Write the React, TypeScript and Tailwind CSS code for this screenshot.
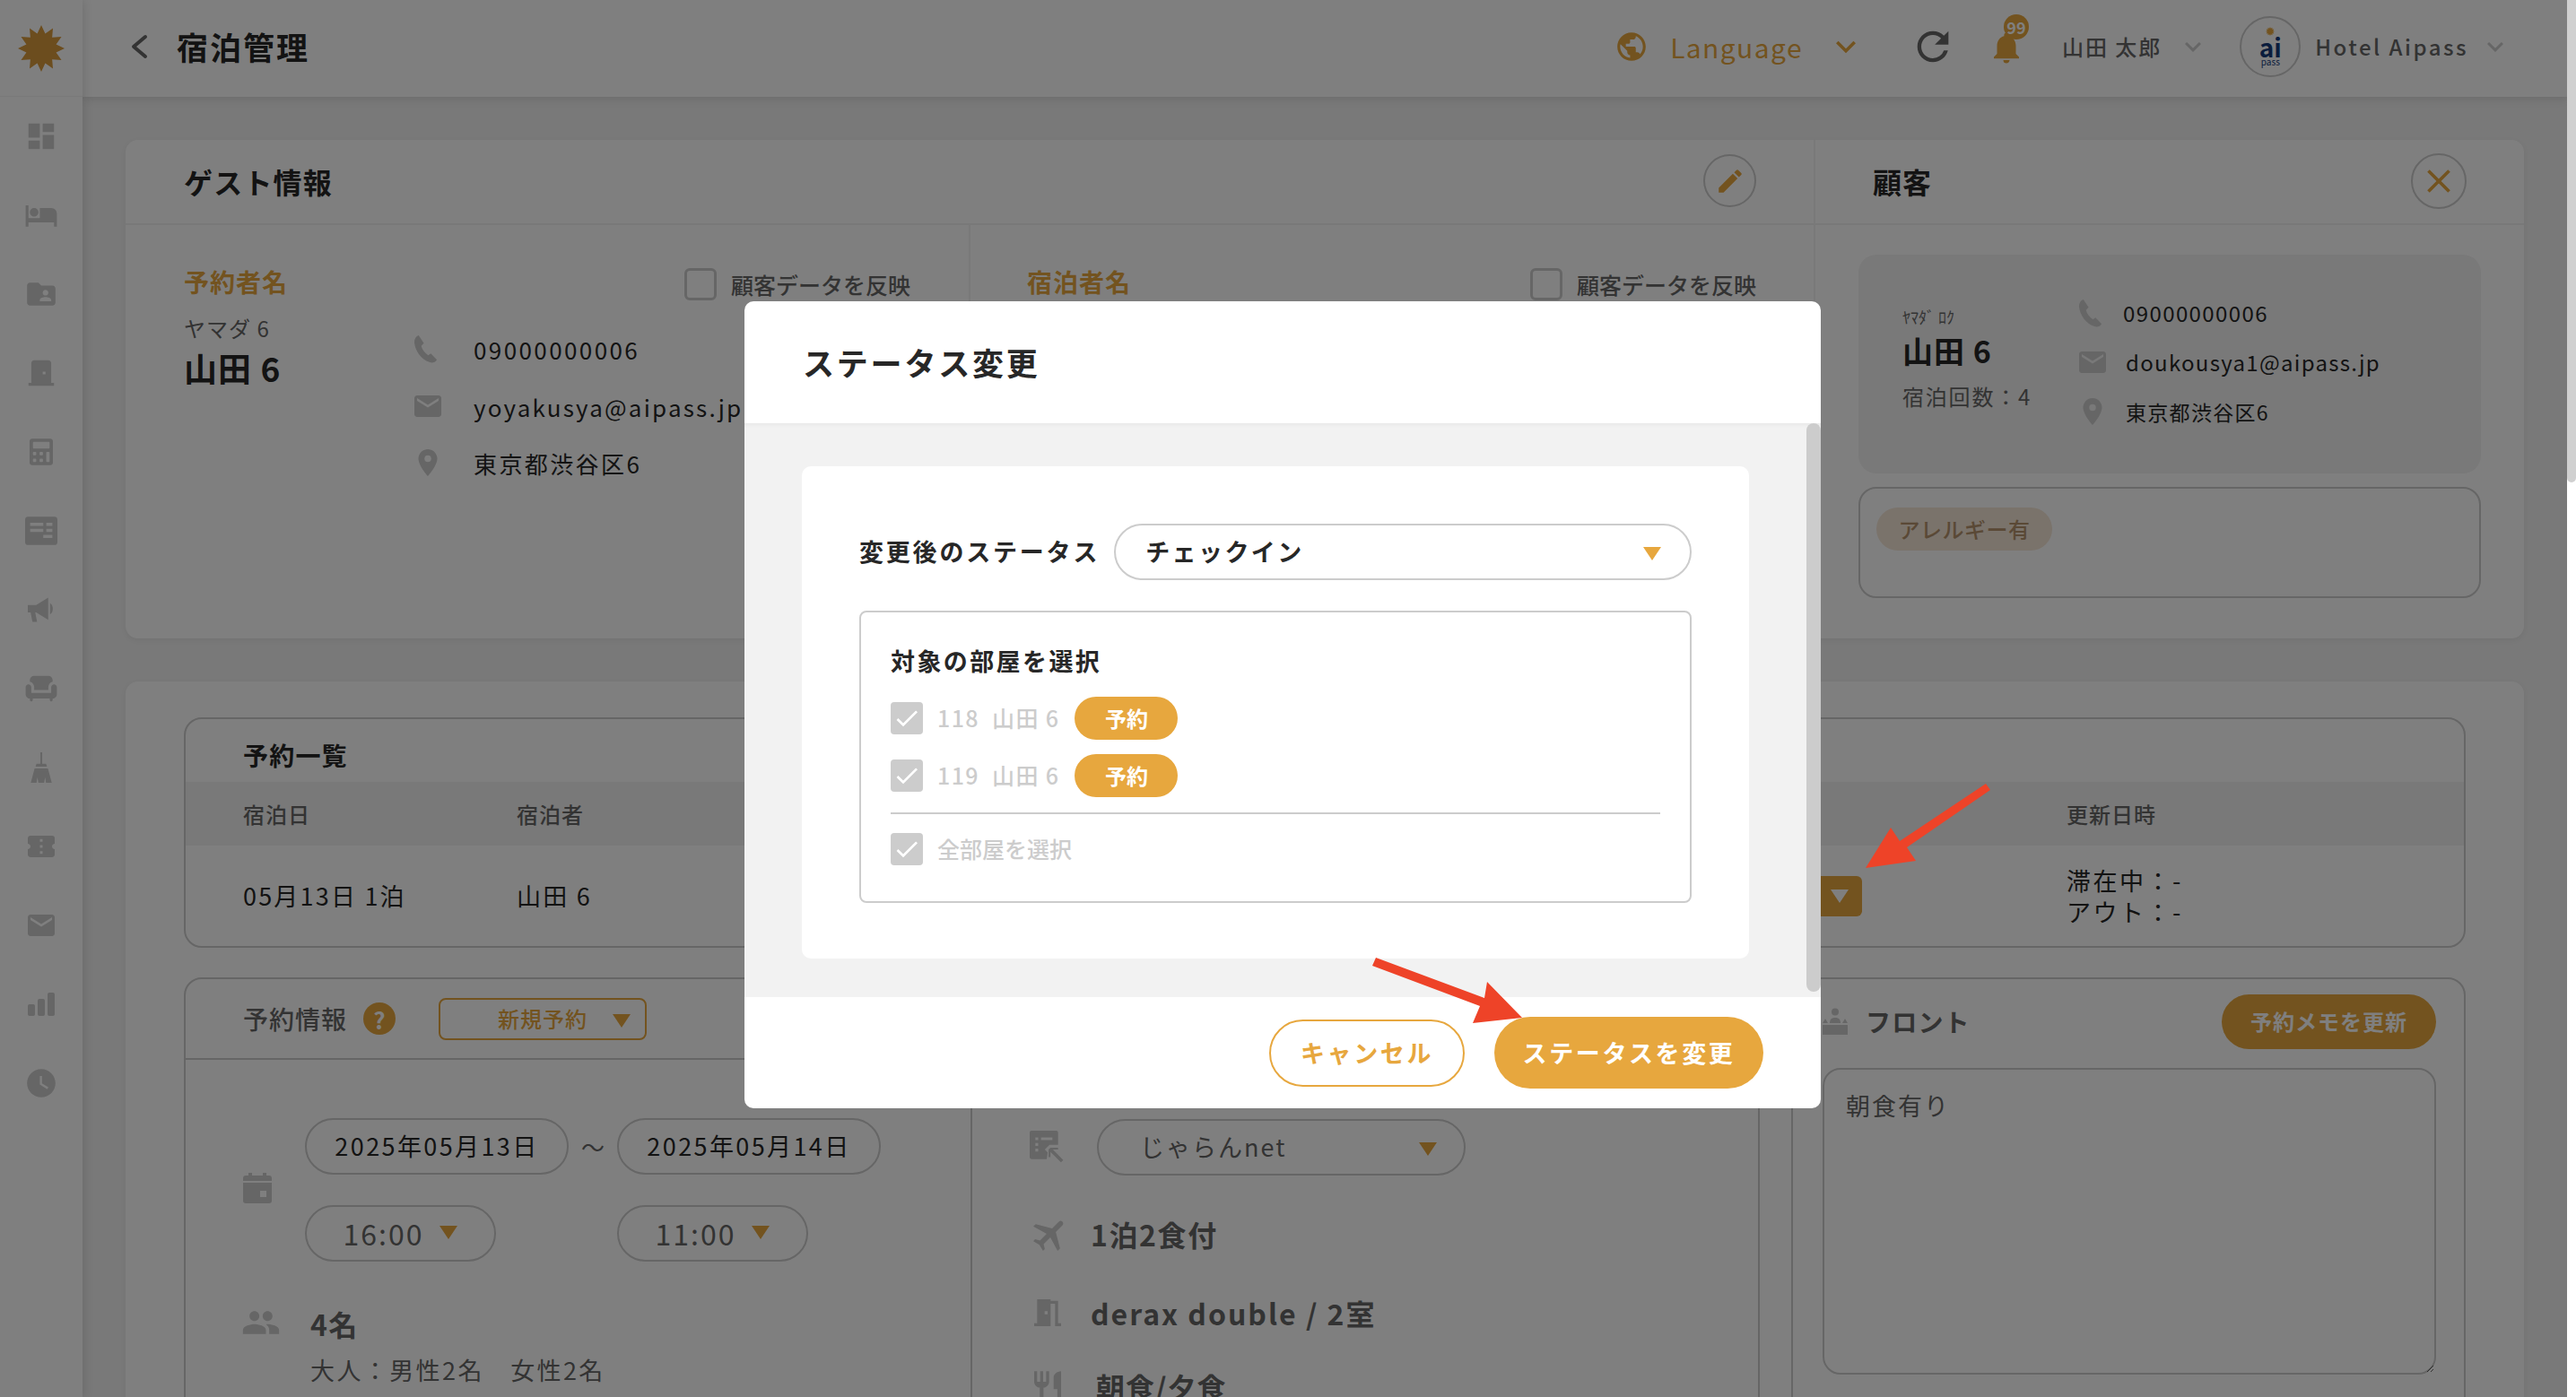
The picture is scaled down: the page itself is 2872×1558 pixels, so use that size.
import React from "react";
import {
  MdDashboard,
  MdHotel,
  MdFolderShared,
  MdMeetingRoom,
  MdDoorFront,
  MdChair,
  MdConfirmationNumber,
  MdEmail,
  MdWatchLater,
  MdPlace,
  MdPeople,
  MdAirplanemodeActive,
  MdRestaurant,
  MdEdit,
  MdClose,
  MdPublic,
  MdRefresh,
  MdNotifications,
  MdKeyboardArrowDown,
  MdCheck,
} from "react-icons/md";
import { FaCalculator } from "react-icons/fa";

const font = { fontFamily: '"Noto Sans CJK JP", "Noto Sans", sans-serif' };

const NewsIcon = () => (
  <svg viewBox="0 0 32 28" className="h-[32px] w-[36px]" fill="#cccccc">
    <path d="M3 0h26a3 3 0 0 1 3 3v22a3 3 0 0 1-3 3H3a3 3 0 0 1-3-3V3a3 3 0 0 1 3-3zM5 6v3h13V6zm16 0v3h6V6zM5 12v3h13v-3zm16 0v3h6v-3zm-3 6v3h9v-3z" fillRule="evenodd" />
  </svg>
);

const MegaphoneIcon = () => (
  <svg viewBox="0 0 30 28" className="h-[30px] w-[31px]" fill="#cccccc">
    <path d="M0 9h9L22 1v24L9 17H8l2 10H5L3 17H0z" />
    <path d="M24 7c4 2 4 10 0 12z" />
  </svg>
);

const BroomIcon = () => (
  <svg viewBox="0 0 24 32" className="h-[34px] w-[26px]" fill="#cccccc">
    <path d="M11 0h2v12h4l1 3H6l1-3h4z" />
    <path d="M5 17h14l4 15h-6l-1-6-1 6H9l-1-6-1 6H1z" />
  </svg>
);

const BarsIcon = () => (
  <svg viewBox="0 0 30 26" className="h-[26px] w-[30px]" fill="#cccccc">
    <rect x="0" y="13" width="8" height="13" rx="2" />
    <rect x="11" y="7" width="8" height="19" rx="2" />
    <rect x="22" y="0" width="8" height="26" rx="2" />
  </svg>
);

const PhoneIcon = ({ className }: { className: string }) => (
  <svg viewBox="0 0 28 32" className={className} fill="#cccccc">
    <path d="M6 0l6 9-3 3c1 4 4 8 8 11l3-2 7 7c-2 3-5 4-8 3C9 28 2 18 1 8 1 4 3 1 6 0z" />
  </svg>
);

const CalendarIcon = () => (
  <svg viewBox="0 0 32 34" className="mt-[61px] h-[34px] w-[32px] shrink-0" fill="#cccccc">
    <path d="M6 0h4v3h12V0h4v3h3a3 3 0 0 1 3 3v3H0V6a3 3 0 0 1 3-3h3z" />
    <path d="M0 11h32v20a3 3 0 0 1-3 3H3a3 3 0 0 1-3-3zm19 9v7h7v-7z" fillRule="evenodd" />
  </svg>
);

const FrontIcon = () => (
  <svg viewBox="0 0 28 30" className="h-[30px] w-[28px] shrink-0" fill="#cccccc">
    <circle cx="14" cy="4.500" r="4" />
    <path d="M8 17c0-4 2-6 6-6s6 2 6 6z" />
    <path d="M3 12l3 5H0zM25 12l3 5h-6z" />
    <rect x="0" y="19" width="28" height="11" />
  </svg>
);

const SunLogo = ({ className, fill }: { className: string; fill: string }) => {
  const points: string[] = [];
  for (let i = 0; i < 24; i++) {
    const r = i % 2 === 0 ? 50 : 33;
    const a = (Math.PI * 2 * i) / 24;
    points.push(`${50 + r * Math.cos(a)},${50 + r * Math.sin(a)}`);
  }
  return (
    <svg viewBox="0 0 100 100" className={className} fill={fill}>
      <polygon points={points.join(" ")} />
    </svg>
  );
};

const RouteIcon = () => (
  <svg viewBox="0 0 36 36" className="h-[38px] w-[38px] shrink-0" fill="#cccccc">
    <path d="M2 0h26a2 2 0 0 1 2 2v13h-9l-5 5 3 3-1 7H2a2 2 0 0 1-2-2V2a2 2 0 0 1 2-2zm4 7v3h3V7zm6 0v3h12V7zM6 13v3h3v-3zm0 6v3h3v-3z" fillRule="evenodd" />
    <path d="M22 18h8v2h-5.500l11 11-2.500 2.500-11-11V28h-2v-8z" />
  </svg>
);

const Triangle = ({ className }: { className: string }) => (
  <span className={`inline-block h-0 w-0 border-x-[10px] border-t-[15px] border-x-transparent ${className}`} />
);

const navIcons = [
  <MdDashboard key="a" className="h-[38px] w-[38px]" />,
  <MdHotel key="b" className="h-[38px] w-[38px]" />,
  <MdFolderShared key="c" className="h-[38px] w-[38px]" />,
  <MdDoorFront key="d" className="h-[38px] w-[38px]" />,
  <FaCalculator key="e" className="h-[32px] w-[26px]" />,
  <NewsIcon key="f" />,
  <MegaphoneIcon key="g" />,
  <MdChair key="h" className="h-[38px] w-[38px]" />,
  <BroomIcon key="i" />,
  <MdConfirmationNumber key="j" className="h-[36px] w-[36px]" />,
  <MdEmail key="k" className="h-[36px] w-[36px]" />,
  <BarsIcon key="l" />,
  <MdWatchLater key="m" className="h-[38px] w-[38px]" />,
];

const Sidebar = () => (
  <aside className="z-10 flex w-[92px] shrink-0 flex-col bg-white text-[#cccccc] shadow-[0_0_12px_rgba(0,0,0,0.16)]">
    <div className="flex h-[108px] items-center justify-center border-b border-[#f2f2f2]">
      <SunLogo className="h-[52px] w-[52px]" fill="#d89a3c" />
    </div>
    {navIcons.map((icon, i) => (
      <div key={i} className="flex h-[88px] items-center justify-center">
        {icon}
      </div>
    ))}
  </aside>
);

const Header = () => (
  <header className="z-[5] flex h-[108px] shrink-0 items-center bg-white pb-[4px] pl-[53px] shadow-[0_2px_10px_rgba(0,0,0,0.12)]">
    <svg viewBox="0 0 20 28" className="h-[28px] w-[20px]" fill="none" stroke="#676767" strokeWidth="4" strokeLinecap="round" strokeLinejoin="round">
      <path d="M17 3L4 14l13 11" />
    </svg>
    <h1 className="ml-[32px] text-[35px] font-bold tracking-[2px] text-[#272727]">宿泊管理</h1>
    <div className="ml-auto flex items-center">
      <MdPublic className="h-[38px] w-[38px] text-[#e7a73e]" />
      <span className="ml-[24px] text-[30px] tracking-[1.4px] text-[#e7a73e]">Language</span>
      <MdKeyboardArrowDown className="ml-[26px] h-[44px] w-[44px] text-[#e7a73e]" />
      <MdRefresh className="ml-[49px] h-[52px] w-[52px] text-[#676767]" />
      <div className="relative ml-[35px] h-[40px] w-[40px]">
        <MdNotifications className="h-[42px] w-[42px] text-[#e7a73e]" />
        <span className="absolute left-[18px] top-[-16px] flex h-[28px] w-[28px] items-center justify-center rounded-full bg-[#e7a73e] text-[18px] font-bold text-white">99</span>
      </div>
      <span className="ml-[43px] text-[24px] font-medium tracking-[2px] text-[#676767]">山田 太郎</span>
      <MdKeyboardArrowDown className="ml-[17px] h-[36px] w-[36px] text-[#cccccc]" />
      <div className="ml-[34px] flex h-[68px] w-[68px] flex-col items-center justify-center rounded-full border-2 border-[#cccccc] bg-white leading-none">
        <SunLogo className="h-[10px] w-[10px]" fill="#e7a73e" />
        <span className="text-[28px] font-bold leading-[24px] text-[#163a7a]">ai</span>
        <span className="text-[10px] leading-[10px] text-[#163a7a]">pass</span>
      </div>
      <span className="ml-[16px] text-[24px] font-medium tracking-[2.5px] text-[#676767]">Hotel Aipass</span>
      <MdKeyboardArrowDown className="ml-[12px] mr-[62px] h-[36px] w-[36px] text-[#cccccc]" />
    </div>
  </header>
);

const ContactRow = ({ icon, text, className, textClass }: { icon: React.ReactNode; text: string; className: string; textClass: string }) => (
  <div className={`flex items-center ${className}`}>
    <span className="flex text-[#cccccc]">{icon}</span>
    <span className={`text-[#272727] ${textClass}`}>{text}</span>
  </div>
);

const ReflectCheck = () => (
  <label className="flex items-center">
    <span className="h-[36px] w-[36px] rounded-[6px] border-[3px] border-[#cccccc] bg-white" />
    <span className="ml-[16px] text-[25px] font-medium leading-[34px] text-[#676767]">顧客データを反映</span>
  </label>
);

const GuestCard = () => (
  <section className="flex h-[556px] rounded-[14px] bg-white shadow-[0_2px_6px_rgba(0,0,0,0.06)]">
    <div className="flex w-[1884px] flex-col border-r-2 border-[#f2f2f2]">
      <div className="flex h-[95px] items-center justify-between border-b-2 border-[#f2f2f2] pb-[2px] pl-[65px] pr-[64px]">
        <h2 className="text-[32px] font-bold tracking-[1.2px] text-[#272727]">ゲスト情報</h2>
        <button className="flex h-[59px] w-[59px] items-center justify-center rounded-full border-2 border-[#cccccc]">
          <MdEdit className="h-[34px] w-[34px] text-[#e7a73e]" />
        </button>
      </div>
      <div className="flex flex-1">
        <div className="relative w-[942px] border-r-2 border-[#f2f2f2] pl-[65px] pt-[44px]">
          <div className="flex items-start">
            <div className="w-[254px]">
              <div className="text-[28px] font-bold leading-[38px] tracking-[1px] text-[#e7a73e]">予約者名</div>
              <div className="mt-[16px] text-[24px] leading-[34px] tracking-[1px] text-[#676767]">ヤマダ 6</div>
              <div className="mt-[2px] text-[37px] font-bold leading-[50px] tracking-[1px] text-[#272727]">山田 6</div>
            </div>
            <div className="pt-[76px]">
              <ContactRow icon={<PhoneIcon className="h-[31px] w-[31px]" />} text="09000000006" className="h-[36px]" textClass="ml-[38px] text-[26px] tracking-[2.4px]" />
              <ContactRow icon={<MdEmail className="h-[36px] w-[36px]" />} text="yoyakusya@aipass.jp" className="mt-[28px] h-[36px]" textClass="ml-[33px] text-[26px] tracking-[2.2px]" />
              <ContactRow icon={<MdPlace className="h-[40px] w-[36px]" />} text="東京都渋谷区6" className="mt-[27px] h-[36px]" textClass="ml-[33px] text-[26px] tracking-[2.4px]" />
            </div>
          </div>
          <div className="absolute left-[623px] top-[48px]">
            <ReflectCheck />
          </div>
        </div>
        <div className="flex-1 pl-[63px] pr-[64px] pt-[44px]">
          <div className="flex items-start justify-between">
            <div className="text-[28px] font-bold leading-[38px] tracking-[1px] text-[#e7a73e]">宿泊者名</div>
            <div className="mt-[4px]">
              <ReflectCheck />
            </div>
          </div>
        </div>
      </div>
    </div>
    <div className="flex flex-1 flex-col">
      <div className="flex h-[95px] items-center justify-between border-b-2 border-[#f2f2f2] pb-[2px] pl-[64px] pr-[64px]">
        <h2 className="text-[32px] font-bold tracking-[1px] text-[#272727]">顧客</h2>
        <button className="flex h-[62px] w-[62px] items-center justify-center rounded-full border-2 border-[#cccccc]">
          <MdClose className="h-[44px] w-[44px] text-[#e7a73e]" />
        </button>
      </div>
      <div className="px-[48px] pt-[33px]">
        <div className="flex h-[244px] rounded-[20px] bg-[#f2f2f2] pl-[49px] pt-[46px]">
          <div className="w-[194px]">
            <div className="mt-[9px] text-[18px] leading-[28px] text-[#676767]">ﾔﾏﾀﾞ ﾛｸ</div>
            <div className="text-[34px] font-bold leading-[48px] tracking-[1px] text-[#272727]">山田 6</div>
            <div className="mt-[10px] text-[24px] leading-[34px] tracking-[1.8px] text-[#676767]">宿泊回数：4</div>
          </div>
          <div>
            <ContactRow icon={<PhoneIcon className="h-[31px] w-[31px]" />} text="09000000006" className="mt-[3px] h-[32px]" textClass="ml-[21px] text-[24px] tracking-[1.4px]" />
            <ContactRow icon={<MdEmail className="h-[36px] w-[36px]" />} text="doukousya1@aipass.jp" className="mt-[23px] h-[32px]" textClass="ml-[19px] text-[24px] tracking-[1.3px]" />
            <ContactRow icon={<MdPlace className="h-[42px] w-[36px]" />} text="東京都渋谷区6" className="mt-[23px] h-[32px]" textClass="ml-[19px] text-[23px] tracking-[1.3px]" />
          </div>
        </div>
        <div className="mt-[15px] h-[124px] rounded-[20px] border-2 border-[#cccccc] pl-[18px] pt-[21px]">
          <span className="inline-flex h-[48px] w-[196px] items-center justify-center rounded-full bg-[#f5e6d6] text-[24px] font-medium tracking-[0.5px] text-[#b4926c]">アレルギー有</span>
        </div>
      </div>
    </div>
  </section>
);

const ReserveList = () => (
  <div className="h-[257px] rounded-[20px] border-2 border-[#cccccc]">
    <div className="flex h-[70px] items-center pl-[64px] pt-[10px] text-[28px] font-bold tracking-[1.2px] text-[#272727]">予約一覧</div>
    <div className="flex h-[71px] items-center bg-[#f2f2f2] pl-[64px] text-[24px] font-medium tracking-[1px] text-[#676767]">
      <span className="w-[305px]">宿泊日</span>
      <span>宿泊者</span>
      <span className="ml-auto w-[443px]">更新日時</span>
    </div>
    <div className="flex h-[112px] items-center pl-[64px] text-[27px] tracking-[2.2px] text-[#272727]">
      <span className="w-[305px]">05月13日 1泊</span>
      <span>山田 6</span>
      <div className="ml-auto flex items-center">
        <span className="flex h-[45px] w-[76px] items-center justify-end rounded-[6px] bg-[#e7a73e] pr-[15px]">
          <Triangle className="border-x-[8px] border-t-[13px] border-t-white" />
        </span>
        <div className="ml-[228px] w-[443px] text-[27px] leading-[35px] tracking-[2.5px]">
          <div>滞在中：-</div>
          <div>アウト：-</div>
        </div>
      </div>
    </div>
  </div>
);

const Pill = ({ children, className }: { children: React.ReactNode; className: string }) => (
  <div className={`flex h-[63px] items-center justify-center rounded-full border-2 border-[#cccccc] ${className}`}>{children}</div>
);

const ReserveInfo = () => (
  <div className="mt-[33px] flex gap-[35px]">
    <div className="h-[600px] w-[1757px] rounded-t-[20px] border-2 border-[#cccccc]">
      <div className="flex h-[90px] items-center border-b-2 border-[#cccccc] pl-[64px]">
        <span className="text-[28px] font-medium tracking-[1px] text-[#676767]">予約情報</span>
        <span className="ml-[18px] flex h-[36px] w-[36px] items-center justify-center rounded-full bg-[#e7a73e] text-[26px] font-bold text-white">?</span>
        <div className="relative ml-[48px] flex h-[47px] w-[232px] items-center justify-center rounded-[8px] border-2 border-[#e7a73e] text-[24px] font-medium tracking-[1px] text-[#e7a73e]">
          新規予約
          <Triangle className="absolute right-[16px] top-[16px] border-x-[8px] border-t-[12px] border-t-[#e7a73e]" />
        </div>
      </div>
      <div className="flex">
        <div className="w-[877px] shrink-0 border-r-2 border-[#cccccc]">
          <div className="flex pl-[64px] pt-[65px]">
            <CalendarIcon />
            <div className="ml-[37px]">
              <div className="flex items-center">
                <Pill className="w-[294px] text-[27px] tracking-[2.4px] text-[#272727]">2025年05月13日</Pill>
                <span className="w-[54px] text-center text-[26px] text-[#676767]">～</span>
                <Pill className="w-[294px] text-[27px] tracking-[2.4px] text-[#272727]">2025年05月14日</Pill>
              </div>
              <div className="mt-[34px] flex">
                <Pill className="w-[213px] gap-[18px] pb-[2px] text-[32px] tracking-[2px] text-[#676767]">
                  16:00 <Triangle className="border-t-[#e7a73e]" />
                </Pill>
                <Pill className="ml-[135px] w-[213px] gap-[18px] pb-[2px] text-[32px] tracking-[2px] text-[#676767]">
                  11:00 <Triangle className="border-t-[#e7a73e]" />
                </Pill>
              </div>
            </div>
          </div>
          <div className="mt-[46px] flex pl-[62px]">
            <MdPeople className="h-[44px] w-[44px] text-[#cccccc]" />
            <div className="ml-[33px]">
              <div className="text-[32px] font-bold leading-[46px] tracking-[1.4px] text-[#676767]">4名</div>
              <div className="mt-[9px] text-[27px] leading-[40px] tracking-[2.4px] text-[#676767]">大人：男性2名　女性2名</div>
            </div>
          </div>
        </div>
        <div className="flex-1 pl-[64px] pt-[66px]">
          <div className="flex items-center">
            <RouteIcon />
            <div className="relative ml-[37px] flex h-[63px] w-[411px] items-center rounded-full border-2 border-[#cccccc] pl-[46px] text-[27px] tracking-[2px] text-[#676767]">
              じゃらんnet
              <Triangle className="absolute right-[30px] top-[24px] border-t-[#e7a73e]" />
            </div>
          </div>
          <div className="mt-[43px] flex h-[44px] items-center">
            <MdAirplanemodeActive className="h-[46px] w-[46px] shrink-0 rotate-45 text-[#cccccc]" />
            <span className="ml-[22px] text-[32px] font-bold tracking-[1.6px] text-[#676767]">1泊2食付</span>
          </div>
          <div className="mt-[44px] flex h-[44px] items-center">
            <MdMeetingRoom className="h-[40px] w-[40px] shrink-0 text-[#cccccc]" />
            <span className="ml-[28px] text-[32px] font-bold tracking-[2px] text-[#676767]">derax double / 2室</span>
          </div>
          <div className="mt-[38px] flex h-[44px] items-center">
            <MdRestaurant className="h-[40px] w-[40px] shrink-0 text-[#cccccc]" />
            <span className="ml-[34px] text-[32px] font-bold tracking-[1px] text-[#676767]">朝食/夕食</span>
          </div>
        </div>
      </div>
    </div>
    <div className="h-[600px] flex-1 rounded-t-[20px] border-2 border-[#cccccc] pl-[33px] pr-[31px]">
      <div className="flex h-[78px] items-center justify-between pt-[16px]">
        <div className="flex items-center">
          <FrontIcon />
          <span className="ml-[20px] text-[28px] font-bold tracking-[1.2px] text-[#676767]">フロント</span>
        </div>
        <button className="flex h-[61px] w-[239px] items-center justify-center rounded-full bg-[#e7a73e] text-[24px] font-bold tracking-[1px] text-white">予約メモを更新</button>
      </div>
      <textarea
        readOnly
        value="朝食有り"
        className="mt-[21px] h-[342px] w-full rounded-[20px] border-2 border-[#cccccc] px-[24px] py-[20px] text-[27px] tracking-[2px] text-[#676767]"
      />
    </div>
  </div>
);

const RoomRow = ({ room }: { room: string }) => (
  <div className="flex h-[48px] items-center">
    <span className="flex h-[36px] w-[36px] items-center justify-center rounded-[4px] bg-[#cccccc]">
      <MdCheck className="h-[32px] w-[32px] text-white" />
    </span>
    <span className="ml-[16px] whitespace-pre text-[25px] font-medium tracking-[1.4px] text-[#cccccc]">{room}</span>
    <span className="ml-[17px] flex h-[48px] w-[115px] items-center justify-center rounded-full bg-[#e7a73e] text-[24px] font-bold text-white">予約</span>
  </div>
);

const StatusModal = () => (
  <div className="absolute left-[830px] top-[336px] z-20 flex h-[900px] w-[1200px] flex-col overflow-hidden rounded-[10px] bg-white">
    <div className="flex h-[136px] items-center pl-[65px] text-[35px] font-bold tracking-[2.8px] text-[#272727]">ステータス変更</div>
    <div className="relative flex-1 bg-[#f2f2f2] px-[64px] pt-[48px] shadow-[inset_0_6px_6px_-6px_rgba(0,0,0,0.08)]">
      <div className="h-[549px] w-[1056px] rounded-[10px] bg-white px-[64px] pt-[64px]">
        <div className="flex items-center">
          <span className="text-[27px] font-bold tracking-[2.8px] text-[#272727]">変更後のステータス</span>
          <div className="relative ml-[16px] flex h-[63px] flex-1 items-center rounded-full border-2 border-[#cccccc] pl-[33px] text-[27px] font-bold tracking-[2.4px] text-[#272727]">
            チェックイン
            <Triangle className="absolute right-[32px] top-[24px] border-t-[#e7a73e]" />
          </div>
        </div>
        <div className="mt-[34px] h-[326px] rounded-[8px] border-2 border-[#cccccc] px-[33px] pt-[36px]">
          <div className="text-[27px] font-bold leading-[36px] tracking-[2.4px] text-[#272727]">対象の部屋を選択</div>
          <div className="mt-[22px] flex flex-col gap-[16px]">
            <RoomRow room="118  山田 6" />
            <RoomRow room="119  山田 6" />
          </div>
          <div className="mt-[17px] border-t-2 border-[#cccccc]" />
          <div className="mt-[20px] flex items-center">
            <span className="flex h-[36px] w-[36px] items-center justify-center rounded-[4px] bg-[#cccccc]">
              <MdCheck className="h-[32px] w-[32px] text-white" />
            </span>
            <span className="ml-[16px] text-[25px] font-medium text-[#cccccc]">全部屋を選択</span>
          </div>
        </div>
      </div>
      <div className="absolute bottom-[6px] right-0 top-0 w-[16px] rounded-[8px] bg-[#cccccc]" />
    </div>
    <div className="flex h-[124px] items-center justify-end gap-[33px] pr-[64px]">
      <button className="h-[75px] w-[218px] rounded-full border-2 border-[#e7a73e] text-[27px] font-bold tracking-[2.6px] text-[#e7a73e]">キャンセル</button>
      <button className="h-[80px] w-[300px] rounded-full bg-[#e7a73e] text-[27px] font-bold tracking-[2.6px] text-white">ステータスを変更</button>
    </div>
  </div>
);

const Arrows = () => (
  <svg className="absolute left-0 top-0 z-30 h-[1558px] w-[2872px]" viewBox="0 0 2872 1558" fill="#ee4328">
    <polygon points="1534,1068 1530,1077 1650,1122 1642,1141 1697,1135 1658,1095 1655,1113" />
    <polygon points="2214,874 2219,881 2126,945 2136,960 2080,968 2108,923 2118,938" />
  </svg>
);

export default function App() {
  return (
    <div className="relative flex h-[1558px] w-[2872px] overflow-hidden bg-[#f2f2f2]" style={font}>
      <Sidebar />
      <div className="flex min-w-0 flex-1 flex-col">
        <Header />
        <main className="flex-1 pl-[48px] pr-[48px] pt-[48px]">
          <GuestCard />
          <section className="mt-[48px] h-[900px] rounded-t-[14px] bg-white px-[65px] pt-[40px] shadow-[0_2px_6px_rgba(0,0,0,0.06)]">
            <ReserveList />
            <ReserveInfo />
          </section>
        </main>
      </div>
      <div className="z-30 w-[10px] shrink-0 bg-white">
        <div className="h-[538px] rounded-b-[8px] bg-[#d0d0d0]" />
      </div>
      <div className="absolute bottom-0 left-0 right-[10px] top-0 z-20 bg-black/50" />
      <StatusModal />
      <Arrows />
    </div>
  );
}
